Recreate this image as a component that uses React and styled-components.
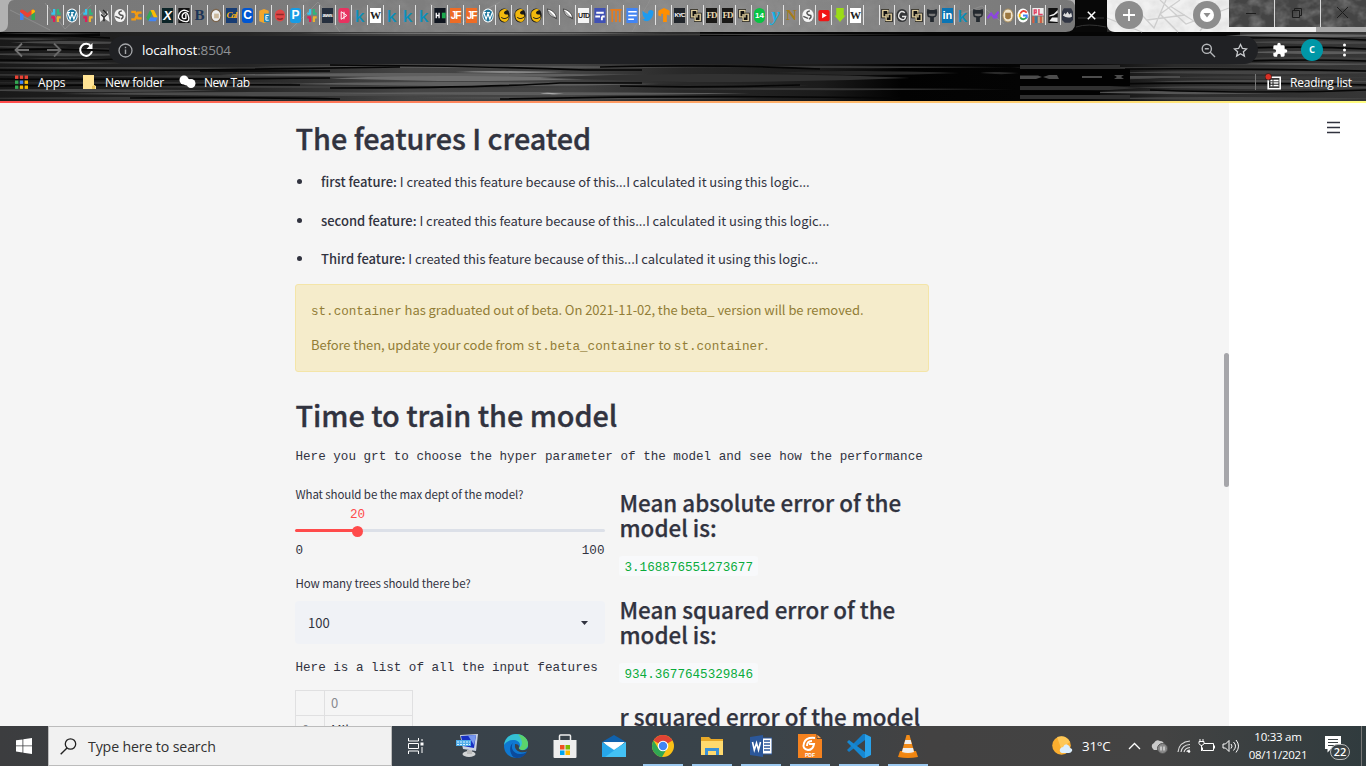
import React from "react";
import styled, { createGlobalStyle } from "styled-components";

const Global = createGlobalStyle`
  * { box-sizing: border-box; }
  html, body { margin: 0; padding: 0; overflow: hidden; }
`;

const sans = `"Noto Sans CJK SC", "Open Sans", sans-serif`;
const mono = `"Liberation Mono", "DejaVu Sans Mono", monospace`;
const ui = `"Open Sans", "Noto Sans", sans-serif`;

const Screen = styled.div`
  width: 1366px;
  height: 766px;
  display: flex;
  flex-direction: column;
  overflow: hidden;
  background: #fff;
`;

/* ---------- browser chrome ---------- */
const Chrome = styled.header`
  height: 101px;
  flex: none;
  position: relative;
  background: #060606;
  font-family: ${ui};
`;
const Texture = styled.svg`
  position: absolute;
  inset: 0;
  width: 1366px;
  height: 101px;
`;
const TabStrip = styled.div`
  position: relative;
  height: 32px;
  display: flex;
`;
const TabGroup = styled.div`
  width: 1075px;
  display: flex;
  height: 32px;
`;
const FirstTab = styled.div`
  width: 47px;
  padding: 0 0 2px 8px;
  display: flex;
  align-items: center;
  justify-content: center;
`;
const TabRun = styled.div`
  width: ${(p) => p.$width}px;
  display: flex;
`;
const Tab = styled.div`
  flex: 1 1 0;
  min-width: 0;
  height: 20px;
  margin-top: 5px;
  border-left: 1px solid rgba(255, 255, 255, 0.75);
  display: flex;
  align-items: center;
  justify-content: center;
`;
const Favicon = styled.span`
  width: 11px;
  height: 15px;
  flex: none;
  display: flex;
  align-items: center;
  justify-content: center;
  background: ${(p) => p.$bg || "transparent"};
  border-radius: ${(p) => p.$radius || 0}px;
  color: ${(p) => p.$color || "#fff"};
  font: ${(p) => p.$font || `700 10px/15px "Liberation Sans", sans-serif`};
  letter-spacing: ${(p) => p.$tight || 0}px;
  white-space: nowrap;
`;
const Glyph = styled.svg`
  width: ${(p) => p.$w || 12}px;
  height: ${(p) => p.$h || 15}px;
  flex: none;
  display: block;
`;
const ActiveTab = styled.div`
  width: 32px;
  display: flex;
  align-items: center;
  justify-content: center;
  padding-bottom: 2px;
`;
const StripButtons = styled.div`
  width: 122px;
  display: flex;
  justify-content: space-between;
  padding: 1px 8px 0 8px;
`;
const RoundButton = styled.span`
  width: 28px;
  height: 28px;
  border-radius: 50%;
  background: #8d8d8d;
  display: flex;
  align-items: center;
  justify-content: center;
`;
const WindowButtons = styled.div`
  width: 137px;
  height: 27px;
  display: flex;
`;
const WindowButton = styled.span`
  flex: 1;
  display: flex;
  align-items: center;
  justify-content: center;
  padding: 0 2px 2px 0;
  & + & { border-left: 1px solid #d8d8d8; }
`;
const Toolbar = styled.div`
  position: relative;
  height: 36px;
  display: flex;
  align-items: center;
`;
const NavButtons = styled.div`
  width: 109px;
  padding-left: 14px;
  display: flex;
  gap: 16px;
`;
const AddressBar = styled.div`
  width: 1149px;
  height: 28px;
  border-radius: 14px;
  background: #202124;
  display: flex;
  align-items: center;
  padding: 0 10px 0 9px;
`;
const Address = styled.span`
  flex: 1;
  margin-left: 9px;
  font-size: 13.5px;
  letter-spacing: -0.15px;
  color: #fff;
  em { font-style: normal; color: #8f9296; }
`;
const BarIcons = styled.span`
  display: flex;
  gap: 17px;
`;
const ToolbarEnd = styled.div`
  flex: 1;
  display: flex;
  align-items: center;
  padding-left: 14px;
`;
const Avatar = styled.span`
  width: 22px;
  height: 22px;
  margin: 0 14px 0 13px;
  border-radius: 50%;
  background: #0097a7;
  color: #fff;
  font-size: 12px;
  font-weight: 600;
  line-height: 20px;
  text-align: center;
`;
const Bookmarks = styled.div`
  position: relative;
  height: 28px;
  display: flex;
  align-items: center;
  color: #fff;
  font-size: 12px;
  padding-left: 14px;
`;
const Bookmark = styled.span`
  width: ${(p) => p.$width}px;
  display: flex;
  align-items: center;
  gap: ${(p) => p.$gap || 8}px;
  white-space: nowrap;
  letter-spacing: ${(p) => p.$track || 0}px;
`;
const ReadingList = styled.span`
  margin-left: auto;
  width: 111px;
  height: 16px;
  border-left: 1px solid #777;
  padding-left: 9px;
  display: flex;
  align-items: center;
  gap: 8px;
  white-space: nowrap;
  letter-spacing: -0.2px;
`;

/* ---------- page ---------- */
const Ribbon = styled.div`
  height: 2px;
  flex: none;
  background: linear-gradient(90deg, #ff4b4b, #fffd80);
`;
const Page = styled.main`
  height: 623px;
  flex: none;
  display: flex;
  overflow: hidden;
  font-family: ${sans};
  color: #31333f;
`;
const Canvas = styled.div`
  width: 1229px;
  background: #f5f5f5;
  display: flex;
  justify-content: space-between;
`;
const Content = styled.div`
  margin-left: 295px;
  width: 634px;
`;
const Scrollbar = styled.div`
  width: 5px;
  height: 134px;
  margin-top: 250px;
  border-radius: 3px;
  background: #a6a6aa;
`;
const Menu = styled.div`
  width: 137px;
  padding: 18px 26px 0 0;
  display: flex;
  justify-content: flex-end;
`;
const H1 = styled.h1`
  margin: 0;
  padding: ${(p) => p.$top}px 0 0 0.5px;
  height: ${(p) => p.$height}px;
  font-size: 28.8px;
  font-weight: 500;
  line-height: 38px;
  letter-spacing: -0.03px;
  -webkit-text-stroke: 0.35px #31333f;
  white-space: nowrap;
`;
const List = styled.ul`
  margin: 0;
  padding: 0;
  height: 114px;
  font-size: 13px;
  list-style: none;
`;
const Item = styled.li`
  height: 38.5px;
  line-height: 24px;
  letter-spacing: -0.04px;
  white-space: nowrap;
  display: flex;
  b { font-weight: 500; letter-spacing: 0; }
  &::before {
    content: "";
    flex: none;
    width: 5px;
    height: 5px;
    margin: 9px 19px 0 2px;
    border-radius: 50%;
    background: #31333f;
  }
`;
const Alert = styled.div`
  height: 88px;
  padding: 13px 15px;
  border: 1px solid #f4e5a8;
  border-radius: 3px;
  background: #f5eccb;
  color: #927d36;
  font-size: 13px;
  letter-spacing: -0.05px;
  p { margin: 0 0 11px; height: 24px; line-height: 24px; white-space: nowrap; }
`;
const Code = styled.code`
  font-family: ${mono};
  font-size: 12.6px;
  letter-spacing: 0;
  line-height: 1;
`;
const MonoLine = styled.div`
  height: ${(p) => p.$height}px;
  padding: 1px 0 0 0.5px;
  line-height: 20px;
  font-family: ${mono};
  font-size: 12.6px;
  white-space: pre;
`;
const Columns = styled.div`
  display: flex;
  gap: 15px;
`;
const Column = styled.section`
  width: 310px;
  padding-top: ${(p) => p.$top || 0}px;
`;
const Label = styled.div`
  height: 20px;
  line-height: 18px;
  padding-left: 0.5px;
  font-size: 11.5px;
  letter-spacing: -0.1px;
  white-space: nowrap;
`;
const SliderValue = styled.div`
  height: 18px;
  line-height: 20px;
  width: 125px;
  text-align: center;
  color: #ff4b4b;
  font-family: ${mono};
  font-size: 12.6px;
`;
const Track = styled.div`
  height: 3px;
  margin: 6px 0 8px;
  border-radius: 2px;
  display: flex;
  align-items: center;
  background: linear-gradient(90deg, #ff4b4b 20%, #dce0e8 20%);
`;
const Thumb = styled.i`
  width: 11px;
  height: 11px;
  margin: 1px 0 0 56.500px;
  flex: none;
  border-radius: 50%;
  background: #ff4b4b;
`;
const Ticks = styled.div`
  height: 34px;
  line-height: 22px;
  padding-left: 0.5px;
  display: flex;
  justify-content: space-between;
  font-family: ${mono};
  font-size: 12.6px;
`;
const Select = styled.div`
  height: 43px;
  margin: 7px 0 13px;
  padding: 0 17px 0 13px;
  border-radius: 4px;
  background: #f0f2f6;
  display: flex;
  align-items: center;
  justify-content: space-between;
  font-size: 13px;
`;
const Table = styled.div`
  width: 118px;
  height: 60px;
  margin-top: 13px;
  border: 1px solid #e0e0e1;
  display: grid;
  grid-template-columns: 29px 1fr;
  grid-auto-rows: 25px;
  font-size: 13px;
  color: #888a90;
`;
const Cell = styled.div`
  border-bottom: 1px solid #e0e0e1;
  border-right: ${(p) => (p.$side ? 1 : 0)}px solid #e0e0e1;
  padding-left: 6px;
  line-height: ${(p) => p.$line || 24}px;
  color: ${(p) => p.$color || "inherit"};
`;
const H2 = styled.h2`
  margin: 0;
  height: 65px;
  font-size: 22.4px;
  font-weight: 500;
  line-height: 25px;
  -webkit-text-stroke: 0.25px #31333f;
  white-space: nowrap;
`;
const Value = styled.div`
  width: 139px;
  height: 20px;
  position: relative;
  top: 1px;
  margin: 0 0 22px -1px;
  padding-left: 6px;
  border-radius: 3px;
  background: #f8f9fb;
  color: #09ab3b;
  font-family: ${mono};
  font-size: 12.6px;
  line-height: 24px;
`;

/* ---------- taskbar ---------- */
const Taskbar = styled.footer`
  height: 40px;
  flex: none;
  display: flex;
  color: #fff;
  font-family: ${ui};
  background: linear-gradient(90deg, #3c3d3f, #39424a 30%, #39434a 55%, #434242 68%, #434343 85%, #303b3e);
`;
const Start = styled.div`
  width: 48px;
  display: flex;
  align-items: center;
  justify-content: center;
`;
const Search = styled.div`
  width: 344px;
  border: 1px solid #bcbcbc;
  background: #f1f1f1;
  color: #323232;
  display: flex;
  align-items: center;
  gap: 11px;
  padding-left: 11px;
  font-size: 14.2px;
  letter-spacing: -0.15px;
`;
const Apps = styled.div`
  display: flex;
  width: 644px;
`;
const AppButton = styled.div`
  width: 40px;
  margin-right: 9px;
  display: flex;
  align-items: center;
  justify-content: center;
  border-bottom: 2px solid ${(p) => (p.$open ? "#9bc8ef" : "transparent")};
  padding-top: 2px;
  &:first-child { margin: 0 12px 0 3px; }
`;
const Tray = styled.div`
  flex: 1;
  display: flex;
  align-items: center;
  padding-left: 16px;
`;
const Temp = styled.span`
  width: 46px;
  margin-left: 9px;
  font-size: 13.3px;
  letter-spacing: -0.2px;
  white-space: nowrap;
`;
const TrayIcons = styled.span`
  width: 117px;
  display: flex;
  align-items: center;
`;
const Clock = styled.span`
  width: 66px;
  flex: none;
  text-align: center;
  font-size: 11.5px;
  line-height: 18px;
  letter-spacing: -0.25px;
  white-space: nowrap;
`;
const Notice = styled.span`
  margin-left: 13px;
  width: 30px;
  height: 30px;
  padding-top: 4px;
  position: relative;
`;
const Badge = styled.b`
  position: absolute;
  left: 6px;
  top: 13px;
  width: 20px;
  height: 16px;
  border: 1px solid #b9b9b9;
  border-radius: 8px;
  background: #3b4245;
  font: 600 11px/14px ${ui};
  text-align: center;
`;
const Edge = styled.i`
  margin-left: auto;
  margin-right: 4px;
  width: 1px;
  align-self: stretch;
  background: #777;
`;

/* Streaks of the wood-grain theme: x, y, length, thickness, shade */
const grain = [
  [0, 33, 110, 1, "#3c3c3c"], [-20, 38, 90, 2, "#3a3a3a"], [10, 41, 130, 3, "#484848"], [-20, 46, 90, 2, "#383838"],
  [50, 48, 90, 2, "#333"], [-20, 53, 160, 3, "#444"], [20, 58, 120, 2, "#333"], [-20, 62, 150, 2, "#404040"],
  [-40, 67, 380, 2, "#454545"], [60, 75, 500, 3, "#383838"], [-40, 74, 140, 2, "#333"],
  [-40, 82, 440, 2, "#333"], [90, 86, 520, 2, "#3e3e3e"], [-40, 89, 260, 3, "#454545"],
  [60, 92, 480, 4, "#4c4c4c"], [-40, 97, 420, 3, "#383838"],
  [250, 66, 470, 2, "#5a5a5a"], [220, 73, 430, 4, "#606060"], [330, 76, 270, 5, "#6f6f6f"], [455, 71, 110, 2, "#858585"],
  [290, 82, 370, 4, "#5f5f5f"], [330, 92, 420, 3, "#5c5c5c"], [400, 97, 360, 2, "#505050"], [540, 93, 24, 1, "#aaa"],
  [540, 74, 370, 8, "#323232"], [630, 84, 180, 3, "#292929"], [680, 66, 336, 2, "#363636"], [620, 88, 396, 2, "#363636"],
  [770, 71, 190, 4, "#262626"], [980, 72, 38, 2, "#2a2a2a"],
  [300, 33, 370, 1, "#777"], [600, 34, 330, 1, "#444"],
  [1000, 67, 400, 2, "#383838"], [1080, 76, 90, 3, "#444"],
  [1110, 71, 290, 3, "#444"], [1160, 76, 240, 3, "#3a3a3a"], [1150, 80, 250, 3, "#4a4a4a"],
  [1130, 86, 270, 3, "#454545"], [1080, 91, 220, 3, "#555"], [1090, 97, 300, 3, "#444"],
  [1225, 34, 180, 3, "#666"], [1240, 41, 160, 3, "#484848"],
  [1240, 51, 160, 3, "#5c5c5c"], [1240, 57, 160, 3, "#404040"], [1225, 63, 180, 2, "#555"],
];
const cracks = [
  "M0 36H70L110 38M0 50Q60 48 120 51M0 60Q50 61 120 59M0 70Q100 71 190 70T400 67M0 79Q120 80 330 78M0 86Q150 84 300 85M130 98Q260 97 340 99",
  "M200 71H330M330 65Q480 66 585 70H642M330 88Q480 88 560 83H642M600 67Q720 64 820 69M620 86Q700 88 800 85M500 99Q700 95 900 98",
  "M1125 69Q1240 68 1366 71M1100 84Q1240 82 1366 85M1150 90Q1270 94 1366 90M1245 38Q1300 37 1366 40M1250 48Q1310 46 1366 49M1250 61Q1310 59 1366 61",
];

function WoodAndMarble() {
  return (
    <Texture viewBox="0 0 1366 101">
      <defs>
        <linearGradient id="strip" x1="0" x2="1">
          <stop offset="0" stopColor="#777" /><stop offset=".5" stopColor="#808080" />
          <stop offset=".65" stopColor="#8b8b8b" /><stop offset="1" stopColor="#787878" />
        </linearGradient>
        <linearGradient id="wood" gradientUnits="userSpaceOnUse" x1="0" x2="1366" y1="0" y2="0">
          <stop offset="0" stopColor="#191919" /><stop offset=".18" stopColor="#262626" />
          <stop offset=".3" stopColor="#444" /><stop offset=".42" stopColor="#424242" />
          <stop offset=".5" stopColor="#292929" /><stop offset=".6" stopColor="#1b1b1b" />
          <stop offset=".66" stopColor="#020202" /><stop offset=".79" stopColor="#050505" />
          <stop offset=".86" stopColor="#2b2b2b" /><stop offset="1" stopColor="#363636" />
        </linearGradient>
        <filter id="cloud" x="0" y="0" width="1" height="1">
          <feTurbulence type="fractalNoise" baseFrequency=".08 .1" numOctaves="3" seed="4" />
          <feColorMatrix type="matrix" values="0 0 0 0 .5 0 0 0 0 .5 0 0 0 0 .5 1.6 0 0 0 -.6" />
        </filter>
      </defs>
      <path d="M0 32H1366V101H0Z" fill="url(#wood)" />
      <path d="M0 32H100V36H0ZM700 32H1240V36H700Z" fill="#050505" />
      {grain.map(([x, y, w, h, c], i) => (
        <path key={i} fill={c} d={`M${x} ${y + h / 2}Q${x + w * 0.2} ${y - 0.5} ${x + w * 0.5} ${y}T${x + w} ${y + h / 2}Q${x + w * 0.7} ${y + h + 0.6} ${x + w * 0.4} ${y + h}Z`} />
      ))}
      {cracks.map((d) => <path key={d} d={d} stroke="#060606" strokeWidth="1.700" fill="none" />)}
      <path d="M1020 69H1130V86H1020ZM1020 91H1100V95H1020Z" fill="#020202" />
      <path d="M1020 75.500H1038L1042 77 1036 79H1020ZM1043 77l6-2h8l2 4h-10zM1082 76h20v2h-20zM1114 75h10l-3 2 3 2h-10l3-2zM1130 76h50v2h-50z" fill="#4c4c4c" />
      <path d="M1020 65H1120V69H1020ZM1020 86H1110L1140 88 1110 90H1020ZM1020 95H1130V99H1020Z" fill="#303030" />
      <path d="M0 0H1366V32H0Z" fill="#b2b2b2" />
      <path d="M0 32C9 31 8 25 8 18V8Q8 0 14 0H1067Q1075 0 1075 8V24Q1075 32 1067 32Z" fill="url(#strip)" />
      <path d="M10 10l40 20M45 3l20 26 26-24M290 30l28-28 22 30M430 4l30 20 40-22M650 0l-18 32M960 14l22-8 22 18" stroke="#909090" strokeWidth=".8" fill="none" />
      <path d="M290 0H640V32H290ZM645 0H960V32H645Z" fill="#aaa" filter="url(#cloud)" opacity=".16" />
      <path d="M1066 32Q1075 31 1075 24V0H1107V24Q1107 31 1115 32Z" fill="#080808" />
      <path d="M1078 18H1104M1076 27Q1088 23 1106 27" stroke="#333" fill="none" />
      <path d="M1107 0H1229V32H1115Q1107 31 1107 24Z" fill="#f1f1f1" />
      <path d="M1107 18l35 14M1130 2l24 26 12-28M1160 0l26 24 43-16M1178 32l-18-18 20-14M1200 31l18-24M1147 20l38-5M1170 6l30 19" stroke="#cfcfcf" strokeWidth="1.300" fill="none" />
      <path d="M1107 0H1229V32H1107Z" filter="url(#cloud)" opacity=".35" />
      <path d="M1229 0H1366V27H1229Z" fill="#444" />
      <path d="M1229 0H1366V27H1229Z" filter="url(#cloud)" opacity=".5" />
      <path d="M1229 27H1316V32H1229Z" fill="#eee" />
      <path d="M1316 27H1366V32H1316Z" fill="#a9a9a9" />
    </Texture>
  );
}

const Slack = () => (
  <Glyph viewBox="0 0 12 16">
    <path d="M4 1v6M1 6h4" stroke="#36c5f0" strokeWidth="2.400" /><path d="M8 1v6M7 6h4" stroke="#2eb67d" strokeWidth="2.400" />
    <path d="M8 10v5M7 10h4" stroke="#ecb22e" strokeWidth="2.400" /><path d="M4 10v5M1 10h4" stroke="#e01e5a" strokeWidth="2.400" />
  </Glyph>
);
const Gmail = () => (
  <Glyph $w={15} $h={12} viewBox="0 0 15 12">
    <path d="M0 2v9h3.500V4z" fill="#4285f4" /><path d="M15 2v9h-3.500V4z" fill="#34a853" />
    <path d="M0 2Q1-.5 3.500 1L7.500 4 11.500 1Q14-.5 15 2v1L7.500 8.500 0 3z" fill="#ea4335" /><path d="M11.500 1Q14-.5 15 2v1l-3.500 2.600z" fill="#fbbc04" />
  </Glyph>
);
const WordPress = () => (
  <Glyph viewBox="0 0 12 16"><ellipse cx="6" cy="8" rx="6" ry="7.500" fill="#fff" /><ellipse cx="6" cy="8" rx="5" ry="6.500" fill="#1b769c" /><path d="M1.500 5l2.500 7 2-6 2 6 2.500-7M1 5h3M5 5h3" stroke="#fff" strokeWidth="1.300" fill="none" /></Glyph>
);
const Globe = () => (
  <Glyph viewBox="0 0 12 16"><ellipse cx="6" cy="8" rx="6" ry="7" fill="#f4f4f4" /><path d="M8 3Q4 4 5 6T9 8Q10 10 7 12M1 9l5 2" stroke="#555" strokeWidth="1.500" fill="none" /></Glyph>
);
const Drive = () => (
  <Glyph viewBox="0 0 12 16"><path d="M4 2h4l4 8H8z" fill="#fbbc04" /><path d="M4 2l2 4-4 8-2-4z" fill="#34a853" /><path d="M4 10h8l-2 4H2z" fill="#4285f4" /></Glyph>
);
const Knight = () => (
  <Glyph viewBox="0 0 12 16"><ellipse cx="6" cy="8" rx="6" ry="7.500" fill="#191919" /><path d="M1 5Q5-1 10 2 6 3 6 5T10 7L11 9Q11 14 7 15 1 14 1 8z" fill="#f2b90d" /><path d="M3 10q4 3 8-1M7 5l4-1" stroke="#191919" fill="none" /></Glyph>
);
const Feather = () => (
  <Glyph viewBox="0 0 12 16"><path d="M1 1q9 2 10 10-9-2-10-10z" fill="#fff" stroke="#333" strokeWidth=".8" /><path d="M2 3l9 9" stroke="#333" strokeWidth=".8" /></Glyph>
);
const Octocat = () => (
  <Glyph viewBox="0 0 12 16"><path d="M1 1l3 1h4l3-1q1 3 0 7-1 2-3 2v5H4v-5Q1 10 1 8 0 4 1 1z" fill="#24292f" /><path d="M2.500 6h7v2q-3 1.500-7 0z" fill="#777" /></Glyph>
);
const Cu = () => (
  <Glyph viewBox="0 0 12 16"><path d="M0 1h8v4h4v10H4v-4H0z" fill="#111" /><path d="M7 5V2.500H1.500v7H5M5 6.500v7h5.500V6.500H7V10" stroke="#e0cf9f" strokeWidth="1.500" fill="none" /></Glyph>
);
const Letter = ({ t, ...p }) => <Favicon {...p}>{t}</Favicon>;
const K = () => <Letter t="k" $color="#0b8fbb" $font={`600 17px/15px "Open Sans", sans-serif`} />;
const Wiki = () => <Letter t="W" $bg="#fff" $color="#222" $font={`700 11px/15px "Liberation Serif", serif`} />;
const JF = () => <Letter t="JF" $bg="#ee6c25" $tight={-1} $font={`700 10px/15px "Liberation Sans", sans-serif`} />;
const FD = () => <Letter t="FD" $bg="#1a1917" $color="#eadcb5" $tight={-1} $font={`700 9px/15px "Liberation Serif", serif`} />;

const runA = [
  <Slack />, <WordPress />, <Slack />,
  <Glyph viewBox="0 0 12 16"><path d="M1 2l5 7 4-6 2 12-6-4-4 4z" fill="#eee" /><path d="M3 7l3 3 4-4M6 10v4M5 2l4 4" stroke="#222" strokeWidth="1.500" fill="none" /></Glyph>,
  <Globe />,
  <Glyph viewBox="0 0 12 16"><path d="M1 4h4l3 7h4M1 12h4l3-7h4" stroke="#f49b12" strokeWidth="2.400" fill="none" /></Glyph>,
  <Drive />,
  <Letter t="X" $bg="#0c2427" $font={`italic 700 13px/15px "Liberation Sans", sans-serif`} />,
  <Glyph viewBox="0 0 12 16"><path d="M0 0h12v16H0z" fill="#111" /><path d="M11 4Q4 0 1 6t4 8 6-4-4-5-3 4 4 2V6" stroke="#fff" strokeWidth="1.400" fill="none" /></Glyph>,
  <Letter t="B" $color="#1d3557" $font={`700 15px/15px "Liberation Serif", serif`} />,
  <Glyph viewBox="0 0 12 16"><ellipse cx="6" cy="8" rx="5.300" ry="6.500" fill="#eee" stroke="#7c654d" strokeWidth="1.300" /><path d="M4 6h5v5H4z" fill="#cbb89c" /></Glyph>,
  <Letter t="Cal" $bg="#173c73" $color="#fdb515" $tight={-1} $font={`italic 700 9px/15px "Liberation Serif", serif`} />,
  <Letter t="C" $bg="#0056d2" $radius={3} $font={`700 12px/15px "Liberation Sans", sans-serif`} />,
  <Glyph viewBox="0 0 12 16"><path d="M1 3l5-2 5 2v11l-5 2-5-2z" fill="#f2a62b" /><path d="M6 6h6v9H6z" fill="#2389be" /><path d="M11 8H8v5h3M8 10.500h2" stroke="#fff" fill="none" /></Glyph>,
  <Glyph viewBox="0 0 12 16"><ellipse cx="6" cy="8" rx="5.500" ry="6.500" fill="#df4545" /><path d="M2 7h8M3 11q3 2 6 0" stroke="#8d2929" strokeWidth="1.500" fill="none" /></Glyph>,
  <Letter t="P" $bg="#179ce5" $radius={3} $font={`700 12px/15px "Liberation Sans", sans-serif`} />,
  <Slack />,
  <Letter t="aws" $bg="#252f3e" $tight={-0.5} $font={`700 6px/12px "Liberation Sans", sans-serif`} />,
  <Glyph viewBox="0 0 12 16"><rect width="12" height="16" rx="3" fill="#e83260" /><path d="M3 4v8l6-4zM6 4v8" stroke="#fff" fill="none" /></Glyph>,
  <K />, <Wiki />, <K />, <K />, <K />,
  <Glyph viewBox="0 0 12 16"><path d="M0 0h12v16H0z" fill="#0e141e" /><path d="M2 5v6M5 5v6M2 8h3" stroke="#fff" strokeWidth="1.400" /><path d="M8 5h4v6H8z" fill="#1ba94c" /></Glyph>,
  <JF />, <JF />, <WordPress />, <Knight />, <Knight />, <Knight />, <Feather />, <Feather />,
  <Letter t="UTD" $bg="#f5f5f5" $color="#222" $tight={-1.2} $font={`700 7px/15px "Liberation Sans", sans-serif`} />,
  <Glyph viewBox="0 0 12 16"><path d="M0 0h12v16H0z" fill="#4051b5" /><path d="M2 5h8M1 9h5M8 9h3M8 9v4" stroke="#fff" strokeWidth="2" /></Glyph>,
  <Glyph viewBox="0 0 12 16"><path d="M0 2h12M2 3v12M6 3v12M10 3v12" stroke="#e57b1d" strokeWidth="1.800" /></Glyph>,
  <Glyph viewBox="0 0 12 16"><path d="M0 0h12v16H0z" fill="#4285f4" /><path d="M2 4h9M2 8h9M2 12h6" stroke="#fff" strokeWidth="1.800" /></Glyph>,
  <Glyph viewBox="0 0 12 16"><path d="M0 3q3 3 6 3 0-4 3-4 2 0 3 2-1 9-7 10-3 0-5-2 2 0 3-1-3-1-3-8z" fill="#1d9bf0" /></Glyph>,
  <Glyph viewBox="0 0 12 16"><path d="M6 0l6 3v5l-3-1v8H5V6H3v3L0 8V3z" fill="#ff8f00" /></Glyph>,
  <Letter t="KYC" $bg="#20242a" $tight={-0.9} $font={`700 6px/15px "Liberation Sans", sans-serif`} />,
  <Cu />, <FD />, <FD />, <Cu />,
  <Letter t="14" $bg="#08c443" $radius={6} $font={`700 8px/15px "Liberation Sans", sans-serif`} />,
  <Letter t="y" $color="#16afe5" $font={`italic 700 18px/12px "Liberation Serif", serif`} />,
  <Letter t="N" $color="#a77b1b" $font={`700 15px/15px "Liberation Serif", serif`} />,
  <Globe />,
  <Glyph viewBox="0 0 12 16"><rect y="2" width="12" height="12" rx="2" fill="#f11515" /><path d="M4 5l5 3-5 3z" fill="#fff" /></Glyph>,
  <Glyph viewBox="0 0 12 16"><path d="M2 0h8v8h2l-6 7-6-7h2z" fill="#9bdc16" /></Glyph>,
  <Wiki />, null,
];
const runB = [
  <Cu />,
  <Glyph viewBox="0 0 12 16"><ellipse cx="6" cy="8" rx="6" ry="7" fill="#343638" /><path d="M9 5q-4-3-6 1t2 6 5-3H6" stroke="#e4e4e4" strokeWidth="1.500" fill="none" /></Glyph>,
  <Cu />, <Octocat />,
  <Letter t="in" $bg="#0a75b5" $font={`700 11px/15px "Liberation Sans", sans-serif`} />,
  <K />, <Octocat />,
  <Glyph viewBox="0 0 12 16"><path d="M0 11l4-5 3 4 5-6M6 10h5" stroke="#8c46df" strokeWidth="2.500" fill="none" /></Glyph>,
  <Glyph viewBox="0 0 12 16"><ellipse cx="6" cy="8" rx="5.500" ry="7" fill="#eee3cc" stroke="#a78a55" /><path d="M3 5h6v5q-3 4-6 0z" fill="#9c7740" /></Glyph>,
  <Glyph viewBox="0 0 12 16"><ellipse cx="6" cy="8" rx="6" ry="7.500" fill="#fff" /><path d="M10 5Q6 1 3 6" stroke="#ea4335" strokeWidth="2" fill="none" /><path d="M2.500 6v4" stroke="#fbbc04" strokeWidth="2" /><path d="M3 10q3 4 7 0" stroke="#34a853" strokeWidth="2" fill="none" /><path d="M6 8h4v3" stroke="#4285f4" strokeWidth="2" fill="none" /></Glyph>,
  <Glyph viewBox="0 0 12 16"><path d="M0 0h12v8H0z" fill="#eee" /><path d="M2 7V2h2v3H2M7 1v6h4" stroke="#df4264" fill="none" strokeWidth="1.500" /><path d="M1 9v7M9 9v7" stroke="#d95b3f" strokeWidth="2" /><path d="M4 9v7" stroke="#377da0" strokeWidth="2" /><path d="M7 9v7M11 9v7" stroke="#d8b48f" strokeWidth="1.500" /></Glyph>,
  <Glyph $w={10} viewBox="0 0 10 16"><path d="M0 0h10v16H0z" fill="#111" /><path d="M1 8l5-2 4-4v3L6 8l-5 1zM1 14l3-4h6v5z" fill="#eee" /></Glyph>,
  <Glyph $w={11} viewBox="0 0 12 16"><path d="M2 0h8l2 4v9l-3 3H3l-3-3V4z" fill="#303543" /><path d="M1 8l2-3 1 2 2-3 2 3 2-2 1 4q-5 3-10-1z" fill="#ddd" /></Glyph>,
];

function BrowserChrome() {
  return (
    <Chrome>
      <WoodAndMarble />
      <TabStrip>
        <TabGroup>
          <FirstTab><Gmail /></FirstTab>
          <TabRun $width={832}>{runA.map((f, i) => <Tab key={i}>{f}</Tab>)}</TabRun>
          <TabRun $width={196}>{runB.map((f, i) => <Tab key={i}>{f}</Tab>)}</TabRun>
        </TabGroup>
        <ActiveTab><Glyph $w={9} $h={9} viewBox="0 0 9 9"><path d="M.8.8l7.400 7.400M8.200.8L.8 8.200" stroke="#fff" strokeWidth="1.500" /></Glyph></ActiveTab>
        <StripButtons>
          <RoundButton><Glyph $w={12} $h={12} viewBox="0 0 12 12"><path d="M6 0v12M0 6h12" stroke="#fff" strokeWidth="1.800" /></Glyph></RoundButton>
          <RoundButton><Glyph $w={14} $h={14} viewBox="0 0 14 14"><circle cx="7" cy="7" r="7" fill="#fff" /><path d="M3.500 5h7L7 9.500z" fill="#8d8d8d" /></Glyph></RoundButton>
        </StripButtons>
        <WindowButtons>
          <WindowButton><Glyph $w={10} $h={10} viewBox="0 0 10 10"><path d="M0 5.500h10" stroke="#1d1d1d" /></Glyph></WindowButton>
          <WindowButton><Glyph $w={10} $h={10} viewBox="0 0 10 10"><path d="M.5 2.500h7v7h-7zM2.500 2.500v-2h7v7h-2" stroke="#1d1d1d" fill="none" /></Glyph></WindowButton>
          <WindowButton><Glyph $w={11} $h={11} viewBox="0 0 11 11"><path d="M0 0l11 11M11 0L0 11" stroke="#1d1d1d" /></Glyph></WindowButton>
        </WindowButtons>
      </TabStrip>
      <Toolbar>
        <NavButtons>
          <Glyph $w={16} $h={16} viewBox="0 0 16 16"><path d="M15 8H2M8 1.500L1.500 8 8 14.500" stroke="#737373" strokeWidth="1.800" fill="none" /></Glyph>
          <Glyph $w={16} $h={16} viewBox="0 0 16 16"><path d="M1 8h13M8 1.500L14.500 8 8 14.500" stroke="#686868" strokeWidth="1.800" fill="none" /></Glyph>
          <Glyph $w={16} $h={16} viewBox="0 0 16 16"><path d="M13 4.300A6 6 0 1 0 14 9.300" stroke="#fff" strokeWidth="2" fill="none" /><path d="M14.500 1v6h-6z" fill="#fff" /></Glyph>
        </NavButtons>
        <AddressBar>
          <Glyph $w={15} $h={15} viewBox="0 0 15 15"><circle cx="7.500" cy="7.500" r="6.500" stroke="#a4a6a9" strokeWidth="1.300" fill="none" /><path d="M7.500 6.500v4.500M7.500 3.800v1.500" stroke="#a4a6a9" strokeWidth="1.400" /></Glyph>
          <Address>localhost<em>:8504</em></Address>
          <BarIcons>
            <Glyph $w={15} $h={15} viewBox="0 0 15 15"><circle cx="5.800" cy="5.800" r="4.600" stroke="#b5b7ba" strokeWidth="1.400" fill="none" /><path d="M9 9l5 5M3.800 5.800h4" stroke="#b5b7ba" strokeWidth="1.400" /></Glyph>
            <Glyph $w={15} $h={15} viewBox="0 0 15 15"><path d="M7.500 1.500l1.900 4 4.200.4-3.200 2.900 1 4.300-3.900-2.300-3.900 2.300 1-4.300L1.400 5.900l4.200-.4z" stroke="#c9cbce" strokeWidth="1.300" fill="none" /></Glyph>
          </BarIcons>
        </AddressBar>
        <ToolbarEnd>
          <Glyph $w={16} $h={16} viewBox="0 0 24 24"><path fill="#fff" d="M20.500 11H19V7a2 2 0 0 0-2-2h-4V3.500a2.500 2.500 0 0 0-5 0V5H4a2 2 0 0 0-2 2v3.800h1.500a2.700 2.700 0 0 1 0 5.400H2V20a2 2 0 0 0 2 2h3.800v-1.500a2.700 2.700 0 0 1 5.400 0V22H17a2 2 0 0 0 2-2v-4h1.500a2.500 2.500 0 0 0 0-5z" /></Glyph>
          <Avatar>c</Avatar>
          <Glyph $w={16} $h={16} viewBox="0 0 16 16"><g fill="#fff"><circle cx="7.500" cy="3" r="1.500" /><circle cx="7.500" cy="8" r="1.500" /><circle cx="7.500" cy="13" r="1.500" /></g></Glyph>
        </ToolbarEnd>
      </Toolbar>
      <Bookmarks>
        <Bookmark $width={69} $gap={10} $track={-0.15}>
          <Glyph $w={14} $h={14} viewBox="0 0 14 14">
            {["#ea4335", "#ea4335", "#ea4335", "#34a853", "#4285f4", "#fbbc04", "#34a853", "#fbbc04", "#fbbc04"].map((c, i) => (
              <rect key={i} x={1 + (i % 3) * 4.8} y={0.5 + Math.floor(i / 3) * 5} width="3.400" height="3.400" fill={c} />
            ))}
          </Glyph>
          Apps
        </Bookmark>
        <Bookmark $width={96} $gap={9} $track={-0.25}>
          <Glyph $w={13} $h={14} viewBox="0 0 13 14"><path d="M0 0h11v10l2 1v3H0z" fill="#ffe394" /><path d="M9 14v-3l3-1v4z" fill="#e8c35a" /></Glyph>
          New folder
        </Bookmark>
        <Bookmark $width={90} $track={-0.45}>
          <Glyph $w={17} $h={14} viewBox="0 0 17 14"><circle cx="5" cy="5" r="4.500" fill="#fff" /><circle cx="8" cy="7" r="3.500" fill="#fff" /><circle cx="12" cy="8.500" r="4.500" fill="#fff" /></Glyph>
          New Tab
        </Bookmark>
        <ReadingList>
          <Glyph $w={17} $h={18} viewBox="0 0 17 18"><path d="M3.200 4.200h12v11.600h-12z" fill="none" stroke="#fff" strokeWidth="1.600" /><path d="M5.500 7.500h2M5.500 10h2M5.500 12.500h2M8.500 7.500h5M8.500 10h5M8.500 12.500h5" stroke="#fff" strokeWidth="1.400" /><circle cx="3.300" cy="3.800" r="3.300" fill="#d93025" stroke="#111" strokeWidth=".6" /></Glyph>
          Reading list
        </ReadingList>
      </Bookmarks>
    </Chrome>
  );
}

const features = ["first feature:", "second feature:", "Third feature:"];

function StreamlitPage() {
  return (
    <Page>
      <Canvas>
        <Content>
          <H1 $top={16} $height={67}>The features I created</H1>
          <List>
            {features.map((name) => (
              <Item key={name}><span><b>{name}</b> I created this feature because of this...I calculated it using this logic...</span></Item>
            ))}
          </List>
          <Alert>
            <p><Code>st.container</Code> has graduated out of beta. On 2021-11-02, the beta_ version will be removed.</p>
            <p>Before then, update your code from <Code>st.beta_container</Code> to <Code>st.container</Code>.</p>
          </Alert>
          <H1 $top={24} $height={74}>Time to train the model</H1>
          <MonoLine $height={39}>Here you grt to choose the hyper parameter of the model and see how the performance</MonoLine>
          <Columns>
            <Column>
              <Label>What should be the max dept of the model?</Label>
              <SliderValue>20</SliderValue>
              <Track><Thumb /></Track>
              <Ticks><span>0</span><span>100</span></Ticks>
              <Label>How many trees should there be?</Label>
              <Select>
                100
                <Glyph $w={7} $h={4} viewBox="0 0 7 4"><path d="M0 0h7L3.500 4z" fill="#31333f" /></Glyph>
              </Select>
              <MonoLine $height={20}>Here is a list of all the input features</MonoLine>
              <Table>
                <Cell $side /><Cell>0</Cell>
                <Cell $side $line={27}>0</Cell><Cell $line={27} $color="#31333f">Mile</Cell>
              </Table>
            </Column>
            <Column $top={5}>
              <H2>Mean absolute error of the<br />model is:</H2>
              <Value>3.168876551273677</Value>
              <H2>Mean squared error of the<br />model is:</H2>
              <Value>934.3677645329846</Value>
              <H2>r squared error of the model</H2>
            </Column>
          </Columns>
        </Content>
        <Scrollbar />
      </Canvas>
      <Menu>
        <Glyph $w={13} $h={13} viewBox="0 0 13 13"><path d="M0 1.500h13M0 6.500h13M0 11.500h13" stroke="#31333f" strokeWidth="1.500" /></Glyph>
      </Menu>
    </Page>
  );
}

function WindowsTaskbar() {
  return (
    <Taskbar>
      <Start><Glyph $w={16} $h={16} viewBox="0 0 16 16"><path d="M0 2.300l6.500-.9v6.100H0zM7.300 1.300L16 0v7.500H7.300zM0 8.300h6.500v6.200L0 13.600zM7.300 8.300H16V16l-8.700-1.300z" fill="#fff" /></Glyph></Start>
      <Search>
        <Glyph $w={17} $h={17} viewBox="0 0 17 17"><circle cx="10.500" cy="6" r="5.200" stroke="#222" strokeWidth="1.300" fill="none" /><path d="M7 10L.7 16.300" stroke="#222" strokeWidth="1.400" /></Glyph>
        Type here to search
      </Search>
      <Apps>
        <AppButton><Glyph $w={17} $h={16} viewBox="0 0 17 16"><path d="M1.500 0v3h10V0M1.500 16v-3h10v3M1.500 5.500h10v5h-10zM15 1v2M15 9v6" stroke="#fff" fill="none" /><path d="M13.500 4.500h3v3h-3z" fill="#fff" /></Glyph></AppButton>
        <AppButton><Glyph $w={24} $h={24} viewBox="0 0 24 24"><ellipse cx="14" cy="20" rx="6.500" ry="3" fill="#d2d4d5" /><path d="M12 16h5v4h-5z" fill="#bbb" /><path d="M5 1l18-1-2 17-13-2z" fill="#c9d2e2" /><path d="M6 2l15-1-2 13-11-2z" fill="#1731c4" /><path d="M13 1.500l8-.5-2 10z" fill="#7999ef" /><path d="M1 6h15v6H1z" fill="#4eabe9" /><path d="M2 8h13M2 10.500h13" stroke="#d7f2ff" strokeDasharray="2 1" /></Glyph></AppButton>
        <AppButton><Glyph $w={24} $h={24} viewBox="0 0 24 24"><circle cx="12" cy="12" r="12" fill="#0f78d1" /><path d="M0 11C1 4 6 0 12 0c7 0 12 5 12 10 0 4-3 6-6 6-2 0-3-1-3-2 1-1 1-2 1-3 0-3-3-5-7-5-4 0-7 2-9 5z" fill="#35c1d4" /><path d="M14 .2C20 1 24 5 24 10c0 4-3 6-6 6-2 0-3-1-3-2 5-3 3-9-1-13.800z" fill="#5bd36b" /><path d="M9 9c-3 4 0 11 7 11 3 0 5-1 7-2-3 5-7 6-11 6C6 23 4 12 9 9z" fill="#0b4a9c" /><path d="M11 10q-1 6 5 8 4 1 8-1v-3q-3 3-7 2-3-1-2-3 0-3-4-3z" fill="#39424a" /></Glyph></AppButton>
        <AppButton><Glyph $w={24} $h={25} viewBox="0 0 24 25"><path d="M6.500 7V2q0-1 1-1h9q1 0 1 1v5" fill="none" stroke="#eee" strokeWidth="1.500" /><path d="M.5 6h23v17q0 1-1 1h-21q-1 0-1-1z" fill="#eee" /><path d="M7 11h4.500v4.500H7z" fill="#f25022" /><path d="M12.500 11H17v4.500h-4.500z" fill="#7fba00" /><path d="M7 16.500h4.500V21H7z" fill="#00a4ef" /><path d="M12.500 16.500H17V21h-4.500z" fill="#ffb900" /></Glyph></AppButton>
        <AppButton><Glyph $w={24} $h={22} viewBox="0 0 24 22"><path d="M0 7L12 0l12 7z" fill="#0f62ae" /><path d="M1 7h22l-9 8H9z" fill="#f5f8fb" /><path d="M0 7l12 8L24 7v15H0z" fill="#26a6ea" /><path d="M24 7v15H3z" fill="#43c1f5" /><path d="M2 7.500h20L12 14z" fill="#fff" /></Glyph></AppButton>
        <AppButton $open><Glyph $w={22} $h={22} viewBox="0 0 22 22"><circle cx="11" cy="11" r="11" fill="#fbc116" /><path d="M11 11L1.500 5.500A11 11 0 0 1 20.500 5.500z" fill="#e04335" /><path d="M1.500 5.500A11 11 0 0 0 10 22l5-8.500-8.700-.2z" fill="#30a753" /><circle cx="11" cy="11" r="5.300" fill="#fff" /><circle cx="11" cy="11" r="4.200" fill="#4285f4" /></Glyph></AppButton>
        <AppButton $open><Glyph $w={22} $h={19} viewBox="0 0 22 19"><path d="M0 0h8l2 2h12v16H0z" fill="#e8a928" /><path d="M0 4h22v14H0z" fill="#ffda6e" /><path d="M4 18V11h14v7h-3v-4H7v4z" fill="#3b91d7" /></Glyph></AppButton>
        <AppButton $open><Glyph $w={22} $h={22} viewBox="0 0 22 22"><path d="M12 3h10v16H12z" fill="#fff" stroke="#2b579a" /><path d="M14 6h6M14 9h6M14 12h6M14 15h6" stroke="#2b579a" strokeWidth="1.500" /><path d="M0 2l13-2v22L0 20z" fill="#2b579a" /><path d="M2.500 7l1.800 8L6.500 8l2 7 2-8" stroke="#fff" strokeWidth="1.600" fill="none" /></Glyph></AppButton>
        <AppButton $open><Glyph $w={24} $h={24} viewBox="0 0 24 24"><path d="M0 0h18l6 5v19H0z" fill="#f5821f" /><path d="M19 0l5 4.500h-5z" fill="#ffa04b" stroke="#333" strokeWidth=".7" /><path d="M17 4Q8 3 6 9t4 7q5 0 6-6h-5M14 7q-5 0-5 5" stroke="#fff" strokeWidth="2" fill="none" /><text x="7" y="22.500" fontFamily="Liberation Sans" fontWeight="700" fontSize="5" fill="#fff">PDF</text></Glyph></AppButton>
        <AppButton $open><Glyph $w={24} $h={24} viewBox="0 0 24 24"><path d="M18 0l6 3v18l-6 3z" fill="#29a2ea" /><path d="M18 6L2 18l-2-2L16 0h2z" fill="#137dc7" /><path d="M18 18L2 6 0 8l16 16h2z" fill="#1688d2" /></Glyph></AppButton>
        <AppButton $open><Glyph $w={20} $h={23} viewBox="0 0 20 23"><path d="M2 16h16l2 6q-10 2-20 0z" fill="#f08510" /><path d="M8.500 0h3l5 18q-6.500 3-13 0z" fill="#f28b18" /><path d="M7.300 5h5.400l1 4H6.200zM5 13h10l1 4q-6 2-12 0z" fill="#eee" /></Glyph></AppButton>
      </Apps>
      <Tray>
        <Glyph $w={21} $h={20} viewBox="0 0 21 20"><circle cx="9.500" cy="9.500" r="9.300" fill="#fbae2f" /><path d="M5 1q9-3 13 5l-9 6z" fill="#ffd166" opacity=".7" /><path d="M10 17q-3-1-2-4 1-2 3-2 2-4 5-2 2 1 2 3 3 1 2 3-1 2-3 2z" fill="#dceefc" /></Glyph>
        <Temp>31°C</Temp>
        <TrayIcons>
          <Glyph $w={23} $h={16} viewBox="0 0 23 16"><path d="M1 11l5.500-5.500L12 11" stroke="#fff" strokeWidth="1.300" fill="none" /></Glyph>
          <Glyph $w={26} $h={16} viewBox="0 0 26 16"><path d="M2 11Q-1 7 3 5q2-4 6-2 4 0 4 4v5H3z" fill="#c9c9c9" /><circle cx="11.500" cy="10.500" r="5" fill="#8a8a8a" stroke="#555" /><path d="M10 8.500v4M13 8.500v4" stroke="#fff" /></Glyph>
          <Glyph $w={21} $h={16} viewBox="0 0 21 16"><path d="M1 14Q2 4 13 3M4 14Q5 7 13 6.500M7 14Q8 10 13 9.500M10 14q0-2 3-2" stroke="#ddd" strokeWidth="1.200" fill="none" /><circle cx="12" cy="13.500" r="1.300" fill="#fff" /></Glyph>
          <Glyph $w={24} $h={16} viewBox="0 0 24 16"><path d="M6 5.500h9.500v7H4.500v-3M2 1v3M5 1v3M1 3.500h5v2q-1 2-2.500 2T1 5.500zM3.500 7v6" stroke="#fff" fill="none" /><path d="M16 7.500h1v3h-1z" fill="#fff" /></Glyph>
          <Glyph $w={18} $h={16} viewBox="0 0 18 16"><path d="M1 6h2.500L7 2.500v11L3.500 10H1zM9 6q2 2 0 4.500M11.500 4q4 4 0 8.500M14 2q5 6 0 12.500" stroke="#fff" fill="none" /></Glyph>
        </TrayIcons>
        <Clock>10:33 am<br />08/11/2021</Clock>
        <Notice>
          <Glyph $w={18} $h={18} viewBox="0 0 18 18"><path d="M1 1h16v13H7l-3.500 3.500V14H1z" fill="#fff" /><path d="M4 4.500h10M4 7.500h10M4 10.500h7" stroke="#3b4245" /></Glyph>
          <Badge>22</Badge>
        </Notice>
        <Edge />
      </Tray>
    </Taskbar>
  );
}

export default function App() {
  return (
    <>
      <Global />
      <Screen>
        <BrowserChrome />
        <Ribbon />
        <StreamlitPage />
        <WindowsTaskbar />
      </Screen>
    </>
  );
}
